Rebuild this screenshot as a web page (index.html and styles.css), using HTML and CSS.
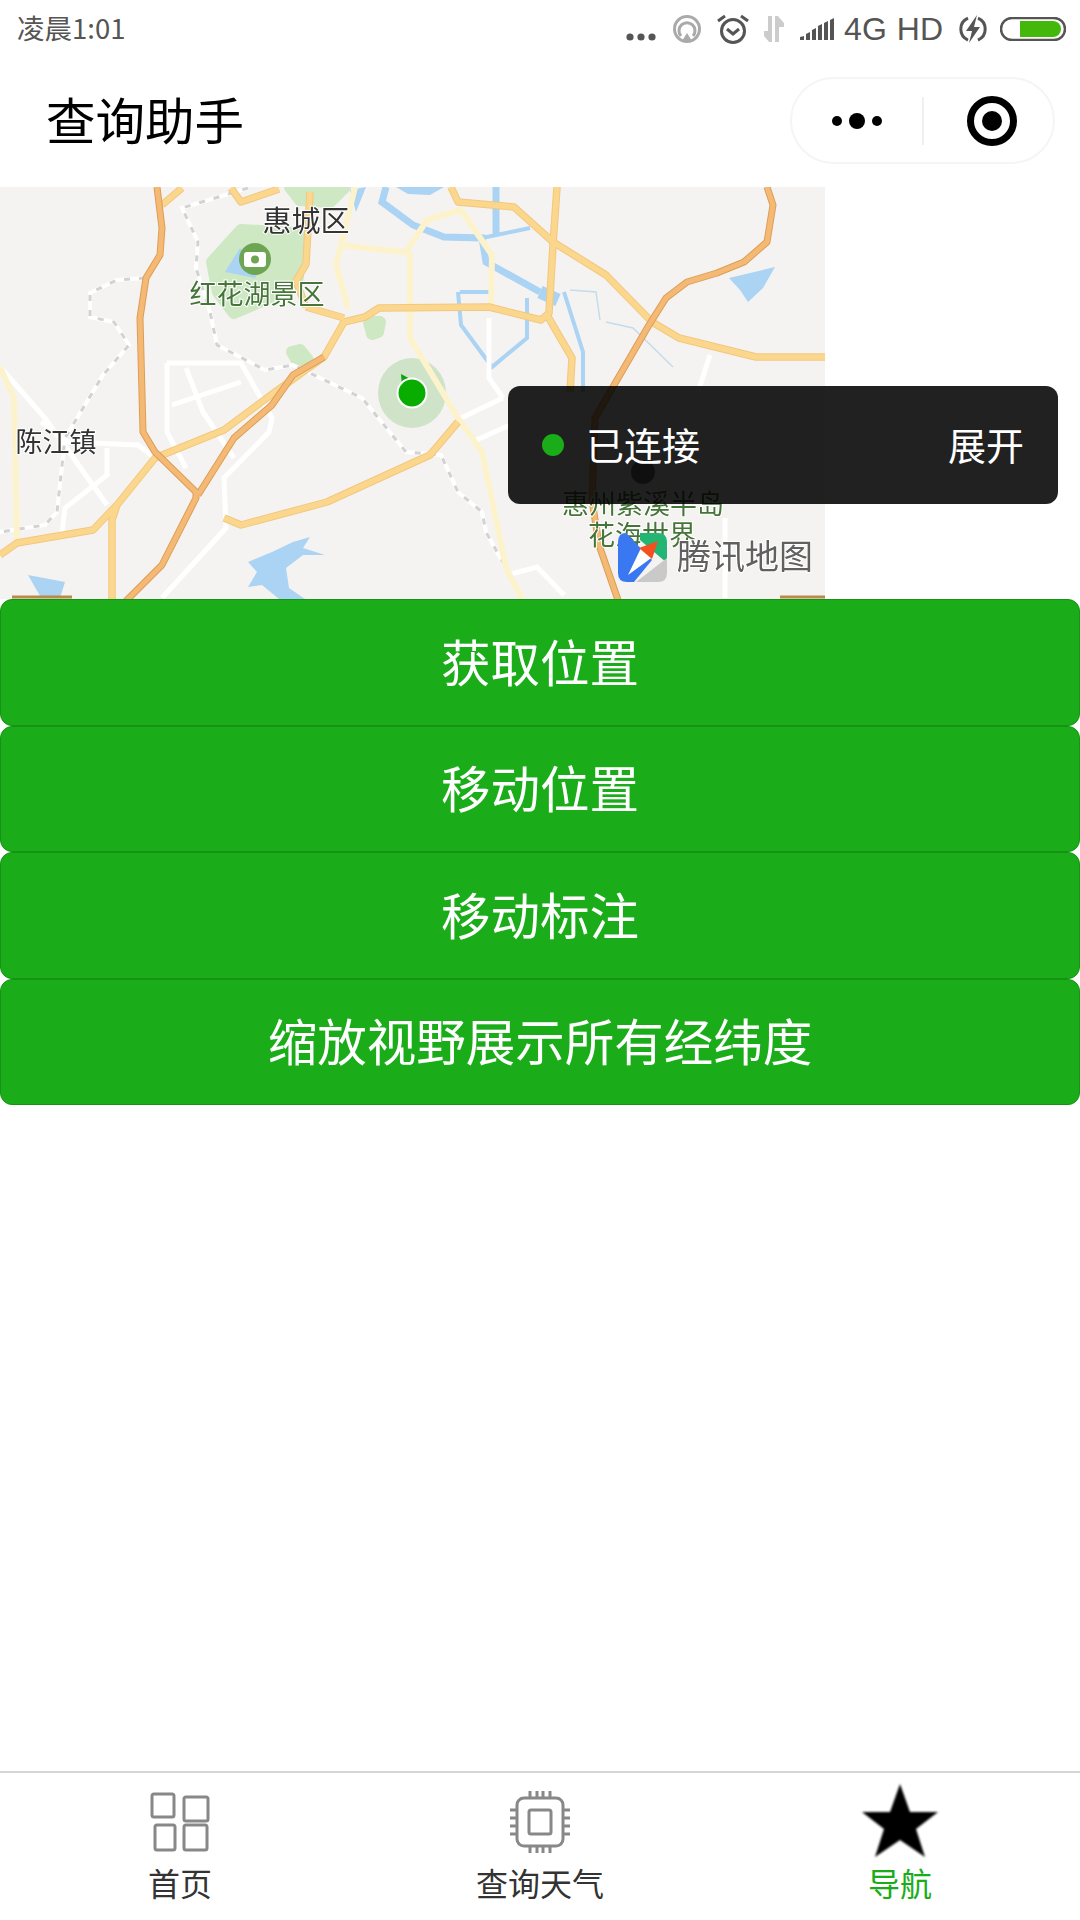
FILE: index.html
```html
<!DOCTYPE html>
<html>
<head>
  <title>查询助手</title>
  <link rel="stylesheet" href="styles.css">
</head>
<body>
  <div class="page">
    <div class="status-bar">
      <span class="status-time">凌晨1:01</span>
      <div class="status-icons">
        <svg class="s-dots" width="30" height="8" viewBox="0 0 30 8"><circle cx="4" cy="4" r="3.6"/><circle cx="15" cy="4" r="3.6"/><circle cx="26" cy="4" r="3.6"/></svg>
        <svg class="s-hotspot" width="30" height="30" viewBox="0 0 30 30"><circle cx="15" cy="15" r="12.5"/><path d="M9 22a8 8 0 1 1 12 0"/><path class="fill" d="M15 19l5 8H10z"/></svg>
        <svg class="s-alarm" width="34" height="32" viewBox="0 0 34 32"><circle cx="17" cy="18" r="11.5"/><path d="M11 16l6 5 6-5"/><path d="M2 8l7-5M32 8l-7-5"/></svg>
        <svg class="s-arrows" width="20" height="26" viewBox="0 0 20 26"><path d="M6 0v24L0 17h6M13 26V2l6 7h-6"/></svg>
        <svg class="s-signal" width="34" height="22" viewBox="0 0 34 22"><path d="M0 22v-3l4-1v4zM6 22v-6l4-2v8zM12 22v-10l4-2v12zM18 22V8l4-2v16zM24 22V5l4-2v19zM30 22V2l4-2v22z"/></svg>
        <span class="status-text">4G</span>
        <span class="status-text">HD</span>
        <svg class="s-charge" width="28" height="28" viewBox="0 0 28 28"><path d="M9 3a12 12 0 0 0 0 22M19 3a12 12 0 0 1 0 22"/><path class="fill" d="M18 0L7 16h6l-3 12 11-16h-6z"/></svg>
        <svg class="s-battery" width="66" height="24" viewBox="0 0 66 24"><rect class="b-shell" x="1" y="1" width="64" height="22" rx="11"/><path class="b-level" d="M20 4h33a8 8 0 0 1 0 16H20z"/></svg>
      </div>
    </div>

    <div class="nav-bar">
      <span class="nav-title">查询助手</span>
      <div class="capsule">
        <svg class="capsule-more" width="54" height="20" viewBox="0 0 54 20"><circle cx="7" cy="10" r="5"/><circle cx="27" cy="10" r="8"/><circle cx="47" cy="10" r="5"/></svg>
        <span class="capsule-line"></span>
        <svg class="capsule-close" width="52" height="52" viewBox="0 0 52 52"><circle class="ring" cx="26" cy="26" r="21.5"/><circle cx="26" cy="26" r="10"/></svg>
      </div>
    </div>

    <div class="map-wrap">
      <svg class="map" width="825" height="412" viewBox="0 187 825 412">
        <defs>
          <path id="hw1" d="M157 187L162 228 160 255 146 278 140 318 143 432 155 452 196 492 196 498 162 565 125 602"/>
          <path id="hw2" d="M324 357L293 375 272 405 234 438 198 495"/>
          <path id="hw3" d="M767 187L773 205 767 242 744 262 717 273 687 282 666 298 649 325 610 392 595 418 592 500 599 545 618 600"/>
          <path id="mr1" d="M0 555L17 543 93 530 117 505 155 458 224 430 275 392 324 357 344 322 365 317 379 308 489 307 541 320 549 313 553 245 557 187"/>
          <path id="mr2" d="M306 307L344 318"/>
          <path id="mr3" d="M224 518L241 525 327 502 430 455 458 422"/>
          <path id="mr4" d="M451 187L458 202 514 207 553 242 606 275 652 322 679 338 756 357 825 357"/>
          <path id="mr5" d="M547 315L572 358 570 392"/>
          <path id="mr6" d="M117 505L112 520 112 599"/>
          <path id="mr7" d="M310 192L306 264 296 281 306 307"/>
          <path id="mr8" d="M162 205L182 188M231 188L241 202 279 189"/>
        </defs>

        <rect x="0" y="187" width="825" height="412" fill="#f5f3f1"/>

        <g class="green">
          <path d="M212 262L241 230 298 233 298 278 269 298 234 313 218 292z"/>
          <path d="M290 187L345 187 330 202 300 200z"/>
          <path d="M369 322L380 322 378 332 372 334z"/>
          <path d="M292 352L300 350 308 360 298 362z"/>
        </g>
        <ellipse class="green-pale" cx="412" cy="393" rx="34" ry="35"/>

        <g class="water-fill">
          <path d="M396 187L444 187 430 195 408 194z"/>
          <path d="M729 278L775 267 763 288 748 302 740 290z"/>
          <path d="M248 562L272 552 293 542 310 537 303 548 325 555 303 555 286 568 289 588 305 599 279 599 262 585 248 587 257 572z"/>
          <path d="M28 575L65 582 60 598 40 596z"/>
          <path d="M240 248L225 272 255 278 260 270z"/>
          <path d="M350 190L366 187 356 212z"/>
        </g>
        <g class="water">
          <path d="M386 187L382 202 413 225 444 237 482 238 486 262 540 292"/>
          <path class="wide" d="M540 292L558 300"/>
          <path d="M496 187V235"/>
          <path class="thin" d="M482 238L530 228"/>
          <path class="thin" d="M458 292L461 325 492 367 527 338 527 298"/>
          <path class="thin" d="M460 292H490"/>
          <path class="thin" d="M564 292L583 352 583 392"/>
          <path class="hair" d="M606 322L633 328 673 367"/>
          <path class="hair" d="M570 290L596 292 600 320"/>
        </g>

        <g class="white-road">
          <path d="M167 363H241L272 418 269 432 224 478 226 528 162 598"/>
          <path d="M167 363V432L186 468"/>
          <path d="M186 368L203 412 234 458"/>
          <path d="M172 405L241 382"/>
          <path d="M0 367L45 418 107 505"/>
          <path d="M41 422L69 442 138 445 155 458"/>
          <path d="M107 448V475L65 508 62 532"/>
          <path d="M461 418L503 398M472 442L510 425M489 318V378L503 398"/>
          <path d="M710 355L698 392"/>
          <path d="M507 575L537 567 564 595"/>
          <path d="M725 518V598"/>
        </g>

        <g class="rail">
          <path d="M248 188L182 208 198 242 196 268 210 312 217 345 265 370 293 365 362 398 406 452 441 455 458 492 482 512 486 532 506 568"/>
          <path d="M145 278L117 280 90 293 90 317 114 322 129 345 103 375 65 438 57 512 45 525 0 532"/>
        </g>
        <g class="rail-dash">
          <path d="M248 188L182 208 198 242 196 268 210 312 217 345 265 370 293 365 362 398 406 452 441 455 458 492 482 512 486 532 506 568"/>
          <path d="M145 278L117 280 90 293 90 317 114 322 129 345 103 375 65 438 57 512 45 525 0 532"/>
        </g>

        <g class="pale-road">
          <path d="M0 367L14 398 17 542"/>
          <path d="M341 245L336 265 348 308"/>
          <path d="M341 245L365 248 406 252 427 220 461 210 492 255 491 308"/>
          <path d="M410 252V338L458 418 482 452 506 568 522 599"/>
          <path d="M355 187L341 245"/>
        </g>

        <g class="road-case">
          <use href="#mr1"/><use href="#mr2"/><use href="#mr3"/><use href="#mr4"/><use href="#mr5"/><use href="#mr6"/><use href="#mr7"/><use href="#mr8"/>
        </g>
        <g class="road">
          <use href="#mr1"/><use href="#mr2"/><use href="#mr3"/><use href="#mr4"/><use href="#mr5"/><use href="#mr6"/><use href="#mr7"/><use href="#mr8"/>
        </g>
        <g class="hw-case">
          <use href="#hw1"/><use href="#hw2"/><use href="#hw3"/>
        </g>
        <g class="hw">
          <use href="#hw1"/><use href="#hw2"/><use href="#hw3"/>
        </g>

        <path class="strip" d="M12 597H72M780 597H825"/>

        <circle class="poi" cx="255" cy="259" r="16"/>
        <rect class="poi-cam" x="244" y="252" width="22" height="15" rx="3"/>
        <circle class="poi" cx="255" cy="259.500" r="4"/>
        <circle class="poi-dark" cx="643" cy="472" r="12"/>

        <text class="lbl lbl-dark" x="306" y="232" font-size="29">惠城区</text>
        <text class="lbl lbl-green" x="257" y="304" font-size="27">红花湖景区</text>
        <text class="lbl lbl-dark" x="56" y="452" font-size="27">陈江镇</text>
        <text class="lbl lbl-green" x="643" y="514" font-size="27">惠州紫溪半岛</text>
        <text class="lbl lbl-green" x="642" y="545" font-size="27">花海世界</text>

        <path class="loc-arrow" d="M401 374L414 381 402 386z"/>
        <circle class="loc-ring" cx="412" cy="393" r="14.500"/>

        <path fill="#22b573" d="M640 533H658Q667 533 667 542V563L640 540z"/>
        <path fill="#c9c9c9" d="M667 558V573Q667 582 658 582H636z"/>
        <path fill="#3a78f2" d="M618 542Q618 533 626 533L652 560 634 582H627Q618 582 618 573z"/>
        <path fill="#ffffff" d="M628 575L641 548 654 556z"/>
        <path fill="#f2501e" d="M639 548L658 541 652 559z"/>
        <text class="lbl lbl-logo" x="745" y="569" font-size="34">腾讯地图</text>
      </svg>

      <div class="conn-panel">
        <span class="conn-dot"></span>
        <span class="conn-text">已连接</span>
        <span class="conn-open">展开</span>
      </div>
    </div>

    <div class="btn-list">
      <button class="btn" type="button">获取位置</button>
      <button class="btn" type="button">移动位置</button>
      <button class="btn" type="button">移动标注</button>
      <button class="btn" type="button">缩放视野展示所有经纬度</button>
    </div>

    <div class="tab-bar">
      <div class="tab">
        <svg class="tab-icon" width="80" height="76" viewBox="0 0 80 76"><rect x="12" y="11" width="22" height="23" rx="2"/><rect x="44" y="14" width="24" height="24" rx="2"/><rect x="15" y="42" width="20" height="25" rx="2"/><rect x="44" y="42" width="23" height="25" rx="2"/></svg>
        <span class="tab-label">首页</span>
      </div>
      <div class="tab">
        <svg class="tab-icon" width="80" height="76" viewBox="0 0 80 76"><rect x="17" y="15" width="46" height="48" rx="7"/><rect x="29" y="27" width="22" height="24" rx="2"/><path d="M30 8v7M37 8v7M43 8v7M50 8v7M30 63v7M37 63v7M43 63v7M50 63v7M10 27h7M10 35h7M10 43h7M10 51h7M63 27h7M63 35h7M63 43h7M63 51h7"/></svg>
        <span class="tab-label">查询天气</span>
      </div>
      <div class="tab">
        <svg class="tab-star" width="80" height="76" viewBox="0 0 80 76"><path d="M40 1L50 29H78L56 46 65 74 40 57 15 74 24 46 2 29H30z"/></svg>
        <span class="tab-label tab-label-on">导航</span>
      </div>
    </div>
  </div>
</body>
</html>
```

FILE: styles.css
```css
html, body {
  margin: 0;
  padding: 0;
  background: #fff;
}

body {
  font-family: "Noto Sans CJK SC", "Liberation Sans", sans-serif;
}

.page {
  width: 1080px;
  height: 1920px;
  display: flex;
  flex-direction: column;
  overflow: hidden;
}

/* status bar */
.status-bar {
  height: 60px;
  display: flex;
  align-items: center;
  justify-content: space-between;
  padding: 0 14px 6px 17px;
  box-sizing: border-box;
  color: #555;
}

.status-time {
  font-size: 27.500px;
}

.status-icons {
  display: flex;
  align-items: center;
  margin-top: 4px;
}

.status-icons svg {
  flex: none;
  fill: none;
  stroke: #555;
}

.status-text {
  font-family: "Liberation Sans", sans-serif;
  font-size: 32px;
  margin-left: 10px;
  color: #555;
}

.s-dots {
  margin-top: 16px;
  stroke: none !important;
  fill: #555 !important;
}

.s-hotspot {
  margin-left: 16px;
  stroke: #aaa !important;
  stroke-width: 3;
}

.s-hotspot .fill {
  fill: #aaa;
  stroke: none;
}

.s-alarm {
  margin-left: 14px;
  stroke-width: 3;
}

.s-arrows {
  margin-left: 14px;
  stroke: #ccc !important;
  stroke-width: 4;
}

.s-signal {
  margin-left: 16px;
  stroke: none !important;
  fill: #555 !important;
}

.s-charge {
  margin-left: 16px;
  stroke-width: 3;
}

.s-charge .fill {
  fill: #555;
  stroke: none;
}

.s-battery {
  margin-left: 13px;
}

.b-shell {
  stroke-width: 2.500;
}

.b-level {
  fill: #44b80a;
  stroke: none;
}

/* nav bar */
.nav-bar {
  height: 127px;
  display: flex;
  align-items: center;
  justify-content: space-between;
  padding: 0 25px 0 46px;
  box-sizing: border-box;
}

.nav-title {
  font-size: 49.500px;
  margin-top: -10px;
  color: #000;
}

.capsule {
  width: 265px;
  height: 87px;
  margin-top: -6px;
  display: flex;
  align-items: center;
  box-sizing: border-box;
  border: 2px solid #f5f5f5;
  border-radius: 44px;
  padding-left: 38px;
}

.capsule-more {
  fill: #000;
}

.capsule-line {
  width: 2px;
  height: 48px;
  margin-left: 38px;
  background: #f0f0f0;
}

.capsule-close {
  margin-left: 42px;
  fill: #000;
}

.capsule-close .ring {
  fill: none;
  stroke: #000;
  stroke-width: 7;
}

/* map */
.map-wrap {
  position: relative;
  height: 412px;
  overflow: visible;
}

.map {
  display: block;
  filter: blur(0.6px);
}

.green {
  fill: #cfe8c4;
  stroke: #cfe8c4;
  stroke-width: 12;
  stroke-linejoin: round;
}

.green-pale {
  fill: #cfe3c8;
}

.water-fill {
  fill: #abd3f3;
}

.water {
  fill: none;
  stroke: #abd3f3;
  stroke-width: 7;
}

.water .wide {
  stroke-width: 13;
}

.water .thin {
  stroke-width: 4;
}

.water .hair {
  stroke-width: 1.500;
  stroke: #c4dcec;
}

.white-road {
  fill: none;
  stroke: #fff;
  stroke-width: 5;
}

.rail {
  fill: none;
  stroke: #fff;
  stroke-width: 4;
}

.rail-dash {
  fill: none;
  stroke: #d2d2d2;
  stroke-width: 3;
  stroke-dasharray: 6 9;
}

.pale-road {
  fill: none;
  stroke: #fcf3cc;
  stroke-width: 6;
  stroke-linejoin: round;
}

.road-case {
  fill: none;
  stroke: #f2c77f;
  stroke-width: 7.500;
  stroke-linejoin: round;
}

.road {
  fill: none;
  stroke: #fbd78e;
  stroke-width: 5.500;
  stroke-linejoin: round;
}

.hw-case {
  fill: none;
  stroke: #dd9d55;
  stroke-width: 7;
  stroke-linejoin: round;
}

.hw {
  fill: none;
  stroke: #f4ba75;
  stroke-width: 5;
  stroke-linejoin: round;
}

.strip {
  fill: none;
  stroke: #b98a4c;
  stroke-width: 3;
}

.poi {
  fill: #6ea553;
}

.poi-cam {
  fill: #fff;
}

.poi-dark {
  fill: #777;
}

.lbl {
  font-family: "Noto Sans CJK SC", sans-serif;
  text-anchor: middle;
  stroke: #fff;
  stroke-width: 2;
  paint-order: stroke;
}

.lbl-dark {
  fill: #333;
}

.lbl-green {
  fill: #457538;
}

.lbl-logo {
  fill: #606060;
}

.loc-arrow {
  fill: #10a010;
}

.loc-ring {
  fill: #09ad00;
  stroke: #fff;
  stroke-width: 2;
}

/* connection panel lies over the map */
.conn-panel {
  position: absolute;
  left: 508px;
  top: 199px;
  width: 550px;
  height: 118px;
  display: flex;
  align-items: center;
  box-sizing: border-box;
  padding: 0 34px 4px;
  background: rgba(0, 0, 0, 0.87);
  border-radius: 12px;
  color: #fff;
  font-size: 38px;
}

.conn-dot {
  width: 22px;
  height: 22px;
  margin-top: 4px;
  border-radius: 50%;
  background: #1aad19;
}

.conn-text {
  margin-left: 22px;
  flex: 1;
}

/* buttons */
.btn-list {
  display: flex;
  flex-direction: column;
}

.btn {
  display: block;
  width: 100%;
  height: 126.500px;
  margin: 0;
  padding: 0 0 4px;
  box-sizing: border-box;
  background: #1aad19;
  border: 1px solid #149412;
  border-radius: 12px;
  color: #fff;
  font: 49.500px "Noto Sans CJK SC", sans-serif;
}

/* tab bar */
.tab-bar {
  margin-top: auto;
  height: 149px;
  display: flex;
  box-sizing: border-box;
  border-top: 2px solid #d5d5d5;
  padding-top: 10px;
}

.tab {
  flex: 1;
  display: flex;
  flex-direction: column;
  align-items: center;
}

.tab-icon {
  fill: none;
  stroke: #888;
  stroke-width: 3;
}

.tab-star {
  fill: #000;
  filter: blur(1px);
}

.tab-label {
  margin-top: 3px;
  font-size: 32px;
  line-height: 40px;
  color: #333;
}

.tab-label-on {
  color: #1aad19;
}
```
